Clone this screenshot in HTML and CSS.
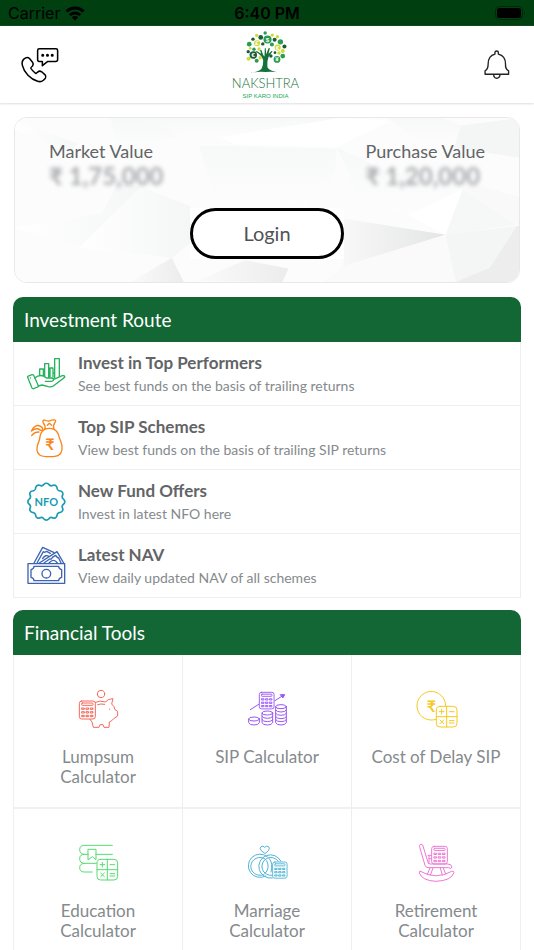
FILE: index.html
```html
<!DOCTYPE html>
<html lang="en">
<head>
<meta charset="utf-8">
<meta name="viewport" content="width=device-width, initial-scale=1">
<title>Nakshtra</title>
<link rel="stylesheet" href="styles.css">
</head>
<body>
<svg class="defs" aria-hidden="true">
  <defs>
    <g id="keypad">
      <rect x="0" y="0" width="48" height="54" rx="7"/>
      <rect x="7" y="6" width="34" height="7" rx="2"/>
      <path d="M8 21h7v4H8zM21 21h7v4h-7zM34 21h7v4h-7zM8 32h7v4H8zM21 32h7v4h-7zM34 32h7v4h-7zM8 43h7v4H8zM21 43h7v4h-7zM34 43h7v4h-7z"/>
    </g>
    <g id="operators">
      <rect x="0" y="0" width="62" height="62" rx="11"/>
      <path d="M31 0v62M0 31h62M9 16h14M16 9v14M39 16h14M11 41l11 11M22 41L11 52M39 43h14M39 50h14"/>
    </g>
  </defs>
</svg>
<div class="app">
  <div class="status">
    <div class="carrier">
      <span>Carrier</span>
      <svg width="20" height="15" viewBox="0 0 20 15" fill="none" stroke="#000" stroke-width="3"><path d="M1.500 5.500a12 12 0 0 1 17 0M4.800 9a7.500 7.500 0 0 1 10.400 0"/><path d="M10 14.500L6.800 11.300a4.500 4.500 0 0 1 6.400 0z" fill="#000" stroke="none"/></svg>
    </div>
    <time class="clock">6:40 PM</time>
    <svg class="battery" width="31" height="14" viewBox="0 0 31 14"><rect x=".5" y=".5" width="27" height="13" rx="4" fill="none" stroke="#002707"/><rect x="2" y="2" width="24" height="10" rx="2.500"/><path d="M29 5q2 2 0 4z" fill="#002707"/></svg>
  </div>

  <header class="topbar">
    <button class="icon-button" type="button" aria-label="Contact us">
      <svg width="40" height="38" viewBox="60 138 118 112" fill="none" stroke="#000" stroke-width="4.500" stroke-linecap="round" stroke-linejoin="round">
        <path d="M72 176Q64 184 67 195C72 216 91 236 112 242Q122 245 129 239L135 233Q138 228 134 223L124 214Q118 210 113 214L107 219Q102 217 92 204Q91 202 97 197Q101 191 97 186L88 175Q83 170 77 173Z"/>
        <path d="M117 146H166Q171 146 171 151V178Q171 184 165 184H141L126 196V184H117Q112 184 112 178V151Q112 146 117 146Z"/>
        <path d="M127 165h.1M141 165h.1M155 165h.1" stroke-width="9"/>
      </svg>
    </button>
    <a class="brand" href="#" aria-label="Nakshtra home">
      <svg width="46" height="44" viewBox="715 86 135 130">
        <path fill="#14713a" d="M732 213Q765 209 770 199Q775 188 774 175Q770 160 752 150L755 148L768 156L765 145L769 145L774 160L778 164L779 140L782 140L783 158L790 140L794 139L790 156L799 148L802 149L790 166Q785 180 787 197Q792 208 829 213Q805 208 781 210Q758 208 732 213Z"/>
        <g fill="#2a9b52"><circle cx="780" cy="95" r="5"/><circle cx="787" cy="114" r="12"/><circle cx="733" cy="128" r="7"/><circle cx="800" cy="129" r="6"/><circle cx="825" cy="121" r="8"/><circle cx="755" cy="177" r="6"/><circle cx="832" cy="163" r="7"/><circle cx="815" cy="173" r="10"/><circle cx="747" cy="143" r="5"/></g>
        <g fill="#1c5c36"><circle cx="767" cy="108" r="7"/><circle cx="744" cy="113" r="5"/><circle cx="808" cy="115" r="6"/><circle cx="837" cy="135" r="6"/><circle cx="745" cy="160" r="11"/><circle cx="730" cy="150" r="5"/><circle cx="797" cy="163" r="5"/><circle cx="773" cy="127" r="5"/><circle cx="809" cy="153" r="4"/></g>
        <g fill="#cbdc3a"><circle cx="755" cy="102" r="5"/><circle cx="801" cy="101" r="5"/><circle cx="816" cy="106" r="5"/><circle cx="756" cy="125" r="9"/><circle cx="817" cy="138" r="9"/><circle cx="736" cy="140" r="4"/><circle cx="731" cy="171" r="6"/><circle cx="762" cy="142" r="5"/><circle cx="832" cy="148" r="6"/><circle cx="821" cy="154" r="5"/><circle cx="765" cy="168" r="5"/></g>
        <g class="coin-signs"><text x="787" y="121">$</text><text x="745" y="167">€</text><text x="817" y="144">€</text><text x="815" y="179">¥</text><text x="756" y="131">£</text></g>
      </svg>
      <span class="brand-name">NAKSHTRA</span>
      <span class="brand-tag">SIP KARO INDIA</span>
    </a>
    <button class="icon-button" type="button" aria-label="Notifications">
      <svg width="28" height="31" viewBox="1418 148 82 91" fill="none" stroke="#222" stroke-width="4" stroke-linejoin="round">
        <path d="M1453 163V158Q1453 154 1458 154Q1463 154 1463 158V163Q1484 168 1484 192Q1483 207 1493 212V222H1424V212Q1433 207 1433 192Q1433 168 1453 163ZM1449 223Q1450 234 1458 234Q1467 234 1468 223"/>
      </svg>
    </button>
  </header>

  <main class="content">
    <section class="summary" aria-label="Portfolio summary">
      <svg class="facets" viewBox="44 52 1482 496" preserveAspectRatio="none" aria-hidden="true">
        <defs>
          <linearGradient id="fade-a"><stop offset="0" stop-color="#f8f8f8"/><stop offset="1" stop-color="#e4e5e5"/></linearGradient>
          <linearGradient id="fade-b"><stop offset="0" stop-color="#fff"/><stop offset="1" stop-color="#f5f6f6"/></linearGradient>
          <linearGradient id="fade-c" x2="0" y2="1"><stop offset="0" stop-color="#f7f8f8"/><stop offset="1" stop-color="#fdfdfd"/></linearGradient>
          <linearGradient id="fade-d"><stop offset="0" stop-color="#fafafa"/><stop offset="1" stop-color="#ececec"/></linearGradient>
        </defs>
        <path fill="#fcfcfc" d="M44 52H1526V548H44Z"/>
        <path fill="url(#fade-b)" d="M44 60L230 130L210 150L44 90Z"/>
        <path fill="url(#fade-c)" d="M325 52H425L530 105L345 155Z"/>
        <path fill="url(#fade-c)" d="M425 52H1000L850 80L650 110L530 105Z"/>
        <path fill="url(#fade-c)" d="M585 135L990 145L985 215L900 320L725 288L640 320Z"/>
        <path fill="#fff" d="M650 110L1000 52L1150 60L990 140L690 132Z"/>
        <path fill="url(#fade-c)" d="M1140 52H1300L1355 75L1335 140L1215 110Z"/>
        <path fill="#f4f5f5" d="M1355 75L1526 52V172L1335 142Z"/>
        <path fill="url(#fade-c)" d="M990 140L1140 215L1385 250L1200 345L1060 300Z"/>
        <path fill="url(#fade-b)" d="M345 250L415 260L232 445L44 385L300 340Z"/>
        <path fill="url(#fade-b)" d="M415 260L560 320L560 430L505 475L232 445Z"/>
        <path fill="url(#fade-d)" d="M385 548L505 475L540 548Z"/>
        <path fill="url(#fade-d)" d="M580 545L720 482L848 507L830 548Z"/>
        <path fill="url(#fade-a)" d="M1005 355L1310 405L1010 500Z"/>
        <path fill="#fafafa" d="M1010 500L1310 405L1340 548H950Z"/>
        <path fill="#fff" d="M1200 345L1360 270L1310 405Z"/>
        <path fill="#f6f7f7" d="M1360 270L1520 375L1310 405Z"/>
        <path fill="#f9f9f9" d="M1385 250L1526 290V375L1360 270Z"/>
        <path fill="#f4f5f5" d="M1310 405L1520 378L1440 505L1340 548Z"/>
        <path fill="#ededed" d="M1520 378H1526V548H1340L1440 505Z"/>
      </svg>
      <dl class="values">
        <div class="value">
          <dt>Market Value</dt>
          <dd>₹ 1,75,000</dd>
        </div>
        <div class="value">
          <dt>Purchase Value</dt>
          <dd>₹ 1,20,000</dd>
        </div>
      </dl>
      <div class="login-wrap"><button class="login" type="button">Login</button></div>
    </section>

    <section class="panel">
      <h2 class="panel-title">Investment Route</h2>
      <nav class="routes" aria-label="Investment Route">
        <a class="route" href="#">
          <svg class="icon green" viewBox="36 12 120 120">
            <path d="M41 79L54 74Q57 73 59 76L73 107Q74 110 71 111L59 116Q56 117 54 114L41 82ZM49 84h.1"/>
            <path d="M62 84Q75 73 89 78L97 84H113Q120 85 118 91Q117 94 112 94H94M119 88L145 77Q153 76 152 82Q150 84 118 108Q112 112 103 110L84 105L73 108"/>
            <path d="M77 74V57H88V77M92 80V41H104V82M108 82V54H117V81M122 84V26H136V79M88 65H92M104 69H108M117 69H122"/>
          </svg>
          <span class="route-text"><strong>Invest in Top Performers</strong><span>See best funds on the basis of trailing returns</span></span>
        </a>
        <a class="route" href="#">
          <svg class="icon orange" viewBox="36 201 120 120">
            <path d="M92 235Q96 226 88 216Q84 208 91 207Q98 211 106 210Q115 206 123 207Q127 209 123 214Q116 224 120 235Q132 241 135 257Q137 264 141 273Q151 302 133 313Q126 317 106 317Q84 317 77 312Q62 300 74 273Q77 267 78 257Q80 242 92 235Q106 229 120 235M100 223L106 217L113 223"/>
            <path d="M52 240Q64 216 81 227Q88 232 86 236Q82 240 77 236Q67 229 52 240ZM53 254Q60 243 75 243"/>
            <text x="108" y="298" font-size="48">₹</text>
          </svg>
          <span class="route-text"><strong>Top SIP Schemes</strong><span>View best funds on the basis of trailing SIP returns</span></span>
        </a>
        <a class="route" href="#">
          <svg class="icon teal" viewBox="36 33 120 120">
            <path stroke-width="5" d="M90 40A9 9 0 0 1 104 40A10 10 0 0 0 117 43A9 9 0 0 1 129 50A10 10 0 0 0 139 60A9 9 0 0 1 146 72A10 10 0 0 0 149 85A9 9 0 0 1 149 99A10 10 0 0 0 146 112A9 9 0 0 1 139 124A10 10 0 0 0 129 134A9 9 0 0 1 117 141A10 10 0 0 0 104 144A9 9 0 0 1 90 144A10 10 0 0 0 77 141A9 9 0 0 1 65 134A10 10 0 0 0 55 124A9 9 0 0 1 48 112A10 10 0 0 0 45 99A9 9 0 0 1 45 85A10 10 0 0 0 48 72A9 9 0 0 1 55 60A10 10 0 0 0 65 50A9 9 0 0 1 77 43A10 10 0 0 0 90 40Z"/>
            <text x="97" y="104" font-size="33">NFO</text>
          </svg>
          <span class="route-text"><strong>New Fund Offers</strong><span>Invest in latest NFO here</span></span>
        </a>
        <a class="route" href="#">
          <svg class="icon blue" viewBox="36 225 120 120">
            <path d="M42 278H152V337H42ZM60 286H134Q134 294 143 296V319Q134 321 134 329H60Q60 321 51 319V296Q60 294 60 286Z"/>
            <circle cx="97" cy="308" r="13"/>
            <path d="M60 276L86 229L119 244M69 276L88 242Q92 246 98 241L109 247M76 276L129 242L149 276M90 276L107 264Q113 266 115 259L125 253Q129 260 134 261L141 276M86 263Q94 249 105 256M105 276Q119 260 130 276"/>
          </svg>
          <span class="route-text"><strong>Latest NAV</strong><span>View daily updated NAV of all schemes</span></span>
        </a>
      </nav>
    </section>

    <section class="panel">
      <h2 class="panel-title">Financial Tools</h2>
      <nav class="tools" aria-label="Financial Tools">
        <a class="tool" href="#">
          <svg class="icon red" viewBox="52 27 120 120">
            <use href="#keypad" transform="translate(56 63)"/>
            <circle cx="121" cy="42" r="11"/>
            <path d="M104 67Q119 60 134 66Q142 56 157 56L153 72Q161 78 163 89L171 94V108L159 116Q154 123 146 126L145 142H130L127 134H118L115 142H98L94 126L88 118M111 74Q120 70 132 73M147 87v1"/>
          </svg>
          <span>Lumpsum Calculator</span>
        </a>
        <a class="tool" href="#">
          <svg class="icon purple" viewBox="36 27 120 120">
            <use href="#keypad" transform="translate(73 37) scale(.92)"/>
            <path d="M46 89L71 73M120 62L145 46"/>
            <path fill="currentColor" d="M137 44H149L144 53Z"/>
            <ellipse cx="57" cy="117" rx="16" ry="6"/><path d="M41 117V128Q44 135 57 135T73 128V117"/>
            <ellipse cx="97" cy="99" rx="16" ry="6"/><path d="M81 99V128Q84 135 97 135T113 128V99M81 109Q84 115 97 115T113 109M81 119Q84 125 97 125T113 119"/>
            <ellipse cx="138" cy="80" rx="16" ry="6"/><path d="M122 80V128Q125 135 138 135T154 128V80M122 90Q125 96 138 96T154 90M122 100Q125 106 138 106T154 100M122 110Q125 116 138 116T154 110M122 119Q125 125 138 125T154 119"/>
          </svg>
          <span>SIP Calculator</span>
        </a>
        <a class="tool" href="#">
          <svg class="icon yellow" viewBox="48 27 120 120">
            <path d="M108 118A43 43 0 1 1 137 77"/>
            <use href="#operators" transform="translate(109 79)"/>
            <text x="94" y="95" font-size="48">₹</text>
          </svg>
          <span>Cost of Delay SIP</span>
        </a>
        <a class="tool" href="#">
          <svg class="icon lime" viewBox="52 24 120 120">
            <path d="M155 31H70Q57 32 57 44T70 58H83M106 58H155M107 85H70Q57 84 57 71T70 58M70 85Q57 86 57 98T70 111H95M83 43H106V74L95 65L83 74Z"/>
            <use href="#operators" transform="translate(109 73)"/>
          </svg>
          <span>Education Calculator</span>
        </a>
        <a class="tool" href="#">
          <svg class="icon sky" viewBox="36 24 120 120">
            <path d="M89 55L78 46Q73 40 78 35Q84 31 89 37Q94 31 101 35Q105 40 101 46Z"/>
            <path d="M92 123A35 35 0 1 1 97 65M85 119A27 27 0 1 1 90 72M89 117Q107 99 95 77"/>
            <path d="M112 129A35 35 0 1 1 138 79M112 121A27 27 0 1 1 130 79M103 71Q115 84 108 111"/>
            <use href="#keypad" transform="translate(113 81) scale(.9)"/>
          </svg>
          <span>Marriage Calculator</span>
        </a>
        <a class="tool" href="#">
          <svg class="icon pink" viewBox="48 24 120 120">
            <use href="#keypad" transform="translate(95 34) scale(.98)"/>
            <path d="M59 30Q63 25 68 30L85 85Q87 87 92 87H143Q155 87 156 96Q154 104 146 98H84Q78 98 75 91L59 36ZM84 61H94M88 71H94M87 61V86"/>
            <path d="M61 109Q108 136 155 109Q162 107 162 113Q154 137 108 139Q66 137 58 114Q57 108 61 109ZM90 99L82 118M99 99L91 121M121 99L127 120M130 99L137 117"/>
          </svg>
          <span>Retirement Calculator</span>
        </a>
      </nav>
    </section>
  </main>
</div>
</body>
</html>
```

FILE: styles.css
```css
* { box-sizing: border-box; }

body {
  margin: 0;
  background: #fff;
  color: #858a8d;
  font-family: Lato, "Liberation Sans", sans-serif;
}

a { color: inherit; text-decoration: none; }

button { font-family: inherit; cursor: pointer; }

.defs { position: absolute; width: 0; height: 0; }

.app {
  display: flex;
  flex-direction: column;
  height: 100vh;
}

.status {
  display: grid;
  grid-template-columns: 1fr auto 1fr;
  align-items: center;
  flex: none;
  height: 26px;
  padding: 0 8px;
  background: #003f10;
  color: #000;
  font: 16px/26px Inter, "Liberation Sans", sans-serif;
}

.carrier { display: flex; align-items: center; gap: 5px; }
.clock { font-weight: 600; }
.battery { justify-self: end; }

.topbar {
  display: grid;
  grid-template-columns: 1fr auto 1fr;
  align-items: center;
  flex: none;
  height: 77px;
  padding: 0 23px 0 20px;
  box-shadow: 0 1px 2px #ddd;
}

.icon-button {
  display: flex;
  justify-self: start;
  padding: 0;
  border: 0;
  background: none;
}

.icon-button:last-child { justify-self: end; }

.brand {
  display: flex;
  flex-direction: column;
  align-items: center;
}

.brand-name {
  color: #14713a;
  font-size: 13px;
  font-weight: 300;
  line-height: 18px;
}

.brand-tag {
  color: #18a957;
  font: 6px/8px "Liberation Sans", sans-serif;
}

.coin-signs {
  fill: #fff;
  font: bold 18px "Liberation Sans", sans-serif;
  text-anchor: middle;
}

.content {
  flex: 1;
  min-height: 0;
  padding: 14px 13px;
  overflow-y: auto;
  scrollbar-width: none;
}

.summary {
  position: relative;
  margin: 0 1px 14px;
  padding: 22px 34px 23px;
  border: 1px solid #e8e8e8;
  border-radius: 13px;
  overflow: hidden;
}

.facets {
  position: absolute;
  inset: 0;
  width: 100%;
  height: 100%;
}

.values {
  position: relative;
  display: flex;
  justify-content: space-between;
  margin: 0 0 18px;
}

.value dt {
  color: #626567;
  font-size: 18px;
  line-height: 22px;
}

.value dd {
  margin: 0;
  color: #a9abae;
  font-size: 24px;
  font-weight: 700;
  line-height: 28px;
  filter: blur(2px);
}

.login-wrap {
  position: relative;
  width: 154px;
  margin: 0 auto;
  background: #fff;
}

.login {
  display: block;
  width: 100%;
  padding: 10px;
  border: 3px solid #000;
  border-radius: 26px;
  background: #fff;
  color: #505254;
  font-size: 20px;
  line-height: 25px;
}

.panel { margin-bottom: 12px; }

.panel-title {
  margin: 0;
  padding: 0 11px;
  border-radius: 10px 10px 0 0;
  background: #136735;
  color: #fff;
  font-size: 19px;
  font-weight: 400;
  line-height: 45px;
}

.route {
  display: flex;
  align-items: center;
  gap: 12px;
  padding: 9px 13px 8px 12px;
  border: 1px solid #eee;
  border-top: 0;
}

.route-text {
  display: flex;
  flex-direction: column;
  font-size: 14px;
  line-height: 23px;
}

.route-text strong {
  color: #626466;
  font-size: 17px;
}

.tools {
  display: grid;
  grid-template-columns: repeat(3, 1fr);
  border-left: 1px solid #eee;
}

.tool {
  display: flex;
  flex-direction: column;
  align-items: center;
  gap: 18px;
  min-height: 154px;
  padding: 34px 12px 20px;
  border-right: 1px solid #eee;
  border-bottom: 2px solid #f0f0f0;
  font-size: 17px;
  line-height: 20px;
  text-align: center;
}

.tool span { max-width: 130px; }
.tool:nth-child(3n + 1) span { max-width: 100px; }

.icon {
  flex: none;
  width: 40px;
  height: 40px;
  overflow: visible;
  fill: none;
  stroke: currentColor;
  stroke-width: 4;
  stroke-linecap: round;
  stroke-linejoin: round;
}

.tool .icon { stroke-width: 3; }

.icon text {
  fill: currentColor;
  stroke: none;
  font-weight: 700;
  text-anchor: middle;
}

.green { color: #27b35e; }
.orange { color: #fb8418; }
.teal { color: #199bb3; }
.blue { color: #3d64b4; }
.red { color: #f4695a; }
.purple { color: #9955f5; }
.yellow { color: #f6c91f; }
.lime { color: #56dc70; }
.sky { color: #50b4d5; }
.pink { color: #ed78d4; }
```
